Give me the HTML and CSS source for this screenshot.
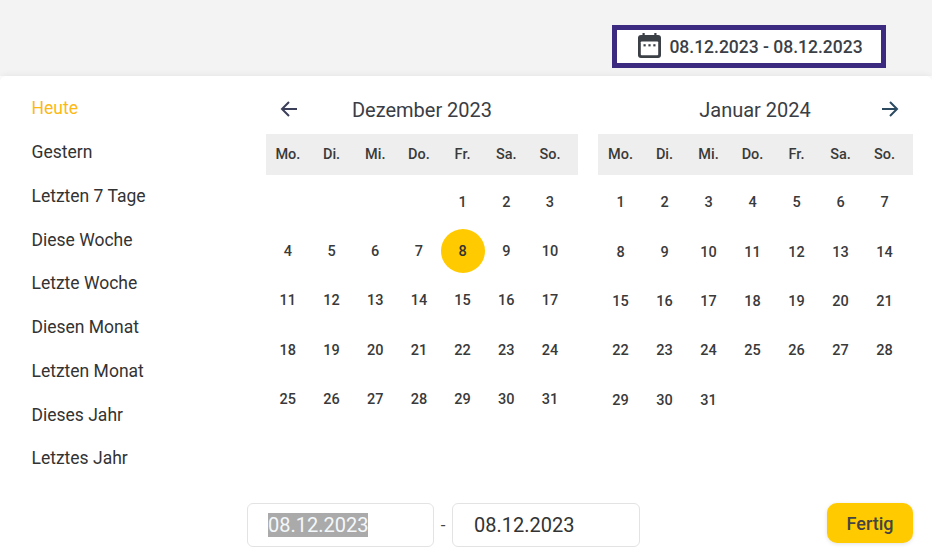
FILE: index.html
```html
<!DOCTYPE html>
<html lang="de">
<head>
<meta charset="utf-8">
<title>Datumsbereich</title>
<link rel="stylesheet" href="styles.css">
</head>
<body>
<header class="topbar">
  <button class="range-btn">
    <svg class="cal-icon" viewBox="0 0 23 25" width="23" height="25"><rect fill="#3b3f46" x="4.500" y="0" width="2.200" height="4"/><rect fill="#3b3f46" x="16.300" y="0" width="2.200" height="4"/><rect fill="#3b3f46" x="0" y="2" width="23" height="23" rx="3"/><rect fill="#fff" x="2.800" y="8.500" width="17.400" height="13.700" rx=".8"/><rect fill="#3b3f46" x="5.500" y="11.200" width="2.200" height="2.200"/><rect fill="#3b3f46" x="10.400" y="11.200" width="2.200" height="2.200"/><rect fill="#3b3f46" x="15.300" y="11.200" width="2.200" height="2.200"/></svg>
    <span>08.12.2023 - 08.12.2023</span>
  </button>
</header>
<main class="panel">
  <ul class="presets">
    <li class="active">Heute</li>
    <li>Gestern</li>
    <li>Letzten 7 Tage</li>
    <li>Diese Woche</li>
    <li>Letzte Woche</li>
    <li>Diesen Monat</li>
    <li>Letzten Monat</li>
    <li>Dieses Jahr</li>
    <li>Letztes Jahr</li>
  </ul>
  <section class="month m1">
    <div class="month-head">
      <svg class="arrow" viewBox="0 0 20 20" width="20" height="20"><path d="M18 10H3M10 3l-7 7 7 7" fill="none" stroke="#3b3f5a" stroke-width="2"/></svg>
      <h2>Dezember 2023</h2>
    </div>
    <div class="weekdays"><span>Mo.</span><span>Di.</span><span>Mi.</span><span>Do.</span><span>Fr.</span><span>Sa.</span><span>So.</span></div>
    <div class="days">
      <span></span><span></span><span></span><span></span><span>1</span><span>2</span><span>3</span>
      <span>4</span><span>5</span><span>6</span><span>7</span><span class="sel"><b>8</b></span><span>9</span><span>10</span>
      <span>11</span><span>12</span><span>13</span><span>14</span><span>15</span><span>16</span><span>17</span>
      <span>18</span><span>19</span><span>20</span><span>21</span><span>22</span><span>23</span><span>24</span>
      <span>25</span><span>26</span><span>27</span><span>28</span><span>29</span><span>30</span><span>31</span>
    </div>
  </section>
  <section class="month m2">
    <div class="month-head">
      <h2>Januar 2024</h2>
      <svg class="arrow" viewBox="0 0 20 20" width="20" height="20"><path d="M2 10h15M10 3l7 7-7 7" fill="none" stroke="#2c4a60" stroke-width="2"/></svg>
    </div>
    <div class="weekdays"><span>Mo.</span><span>Di.</span><span>Mi.</span><span>Do.</span><span>Fr.</span><span>Sa.</span><span>So.</span></div>
    <div class="days">
      <span>1</span><span>2</span><span>3</span><span>4</span><span>5</span><span>6</span><span>7</span>
      <span>8</span><span>9</span><span>10</span><span>11</span><span>12</span><span>13</span><span>14</span>
      <span>15</span><span>16</span><span>17</span><span>18</span><span>19</span><span>20</span><span>21</span>
      <span>22</span><span>23</span><span>24</span><span>25</span><span>26</span><span>27</span><span>28</span>
      <span>29</span><span>30</span><span>31</span>
    </div>
  </section>
  <footer class="foot">
    <div class="inputs">
      <div class="field"><span class="selected">08.12.2023</span></div>
      <span class="dash">-</span>
      <div class="field"><span>08.12.2023</span></div>
    </div>
    <button class="done">Fertig</button>
  </footer>
</main>
</body>
</html>
```
FILE: styles.css
```css
* { box-sizing: border-box; }
html, body { margin: 0; height: 549px; overflow: hidden; }
body { background: #fff; font-family: Roboto, "Liberation Sans", sans-serif; color: #333; }
.topbar { height: 76px; background: #f3f3f3; display: flex; justify-content: flex-end; align-items: flex-start; padding: 25px 46px 0 0; }
.range-btn { width: 274px; height: 43px; border: 5px solid #3c2a80; background: #fff; display: flex; align-items: center; justify-content: center; gap: 8px; padding: 0 0 0 2px; font: 500 17.5px Roboto, sans-serif; color: #3b3f46; }
.cal-icon { flex: none; margin: 0 0 2px 1px; }
.panel { position: relative; height: 473px; background: #fff; border-radius: 6px 6px 0 0; box-shadow: 0 -1px 6px rgba(0,0,0,.06); display: grid; grid-template-columns: 266px 312px 335px; grid-template-rows: 414px 59px; width: 932px; }
.presets { list-style: none; margin: 0; padding: 11.250px 0 0 31.500px; font-size: 17.5px; }
.presets li { height: 43.75px; line-height: 43.75px; color: #333; }
.presets li.active { color: #fdb913; }
.m2 { margin-left: 20px; width: 315px; }
.month-head { height: 58px; display: flex; align-items: center; position: relative; padding-top: 8px; }
.month-head h2 { flex: 1; margin: 0; font-size: 20px; line-height: 24px; font-weight: 400; color: #3a3d44; text-align: center; padding-top: 2px; }
.m1 .month-head { padding-left: 13px; }
.m1 .month-head h2 { padding-right: 33px; }
.m2 .month-head { padding-right: 13px; }
.m2 .month-head h2 { padding-left: 32px; }
.weekdays { height: 41px; padding-bottom: 1px; background: #eee; display: grid; grid-template-columns: repeat(7, 43.7px); align-items: center; justify-items: center; font-size: 14.500px; font-weight: 500; color: #3a3a3a; }
.days { display: grid; grid-template-columns: repeat(7, 43.7px); grid-auto-rows: 49.2px; padding-top: 3px; font-size: 14.500px; font-weight: 500; color: #3a3a3a; }
.m2 .weekdays, .m2 .days { grid-template-columns: repeat(7, 44px); padding-left: .5px; }
.m2 .days { grid-auto-rows: 49.4px; }
.days span { display: flex; align-items: center; justify-content: center; }
.days .sel b { font-weight: 500; width: 44px; height: 44px; flex: none; border-radius: 50%; background: #ffcb00; color: #333; display: flex; align-items: center; justify-content: center; margin-top: -1px; }
.foot { grid-column: 1 / -1; display: flex; justify-content: space-between; align-items: flex-start; padding: 13px 0 0 247px; }
.inputs { display: flex; align-items: center; }
.field { width: 187px; height: 44px; border: 1px solid #e3e3e3; border-radius: 6px; padding-left: 20px; display: flex; align-items: center; font-size: 20px; color: #333; }
.field + .dash + .field { width: 188px; padding-left: 21px; }
.selected { background: #aaa; color: #f4f8fa; line-height: 24px; }
.dash { width: 18px; text-align: center; font-size: 17px; color: #444; }
.done { width: 86px; height: 40px; border: 0; border-radius: 10px; background: #ffcb00; font: 500 18px Roboto, sans-serif; color: #444; box-shadow: 0 1px 4px rgba(0,0,0,.12); }
```
